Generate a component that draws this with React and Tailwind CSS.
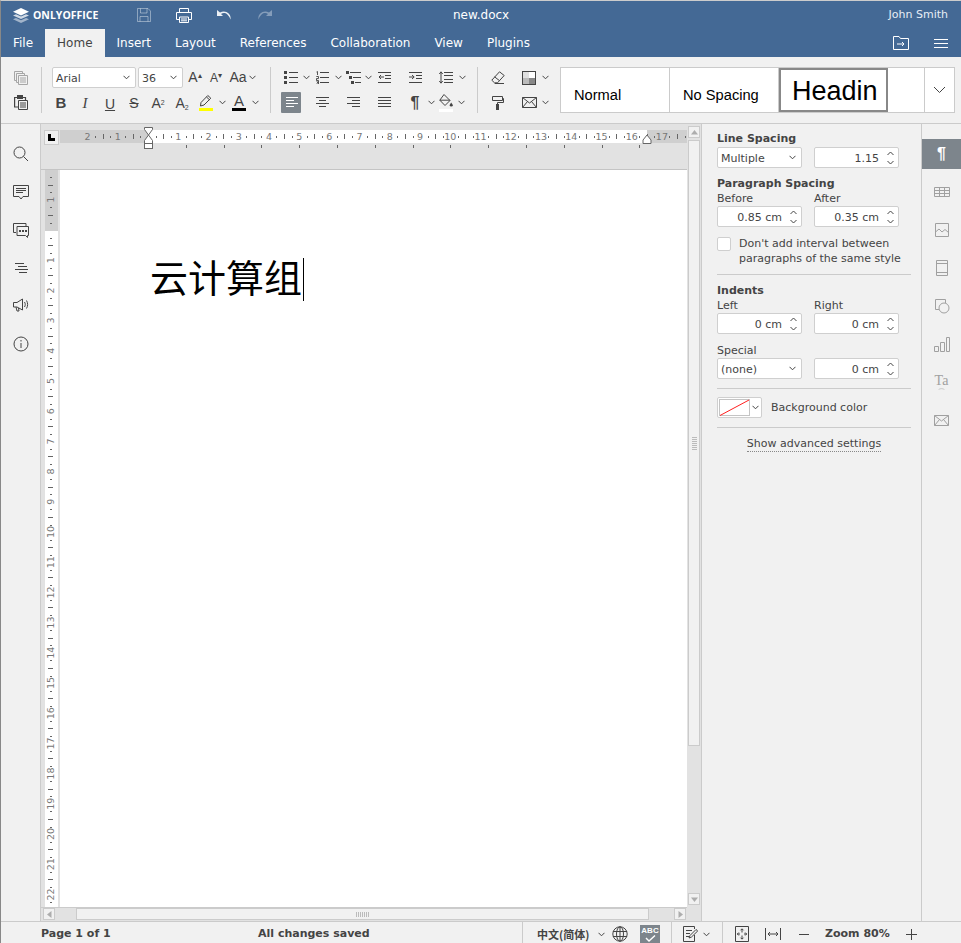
import React from 'react';

const SANS = "font-['DejaVu_Sans',sans-serif]";

const Ic = ({ w = 16, h = 16, children, className = '', stroke = '#444' }) => (
  <svg width={w} height={h} viewBox={`0 0 ${w} ${h}`} fill="none" stroke={stroke} className={className}>
    {children}
  </svg>
);

const Caret = ({ color = '#444' }) => (
  <svg width="7" height="5" viewBox="0 0 7 5" fill="none" stroke={color}>
    <path d="M.5 .8 3.5 3.8 6.5 .8" />
  </svg>
);

// fixed size slot in a toolbar row, the width comes in as a class
const Cell = ({ className = '', children }) => (
  <div className={`flex h-[21px] shrink-0 items-center justify-center ${className}`}>{children}</div>
);

const CaretCell = () => (
  <Cell className="w-[8px]">
    <Caret />
  </Cell>
);

const hLines = (rows) => rows.map(([a, b, y]) => `M${a} ${y}H${b}`).join('');

const Align = ({ rows, stroke }) => (
  <Ic w={13} h={13} stroke={stroke}>
    <path d={hLines(rows)} />
  </Ic>
);

const Bullets = () => (
  <Ic w={14} h={13}>
    <path d={hLines([[5, 14, 1.5], [5, 14, 6.5], [5, 14, 11.5]])} />
    <path fill="#444" stroke="none" d="M0 0h3v3H0zM0 5h3v3H0zM0 10h3v3H0z" />
  </Ic>
);

const Numbers = () => (
  <Ic w={13} h={13}>
    <path d={hLines([[4, 13, 1.5], [4, 13, 6.5], [4, 13, 11.5]])} />
    <path strokeWidth=".9" d="M.5 1 1.5 .5V4M.3 5.5H2.5V7.5H.5V9.4H2.8M.3 10H2.5V13H.3M1 11.5H2.5" />
  </Ic>
);

const Multi = () => (
  <Ic w={15} h={13}>
    <path d={hLines([[4, 15, 1.5], [7, 15, 6.5], [9, 15, 11.5]])} />
    <path fill="#444" stroke="none" d="M0 0h3v3H0zM3 5h3v3H3zM5 10h3v3H5z" />
  </Ic>
);

const Outdent = ({ flip }) => (
  <Ic w={13} h={11}>
    <path d={hLines([[0, 13, .5], [7, 13, 3.5], [7, 13, 6.5], [0, 13, 10.5]])} />
    {flip ? <path d="M0 5H5M3 3 5.2 5 3 7" /> : <path d="M1 5H6M3 3 1 5 3 7" />}
  </Ic>
);

const LineSpacing = () => (
  <Ic w={14} h={13}>
    <path d={hLines([[5, 14, 1.5], [5, 14, 4.5], [5, 14, 8.5], [5, 14, 11.5]])} />
    <path d="M2 1V12M.3 3 2 .8 3.7 3M.3 10 2 12.2 3.7 10" />
  </Ic>
);

const Copy = ({ stroke = '#444' }) => (
  <Ic w={14} h={14} stroke={stroke}>
    <path d="M.5 .5H8.5V2.5M.5 .5V9.5H2.5M2.5 2.5H10.5V4.5M2.5 2.5V11.5H4.5M4.5 4.5H13.5V13.5H4.5Z" />
    <path d={hLines([[6, 12, 7], [6, 12, 9], [6, 12, 11]])} />
  </Ic>
);

const Paste = () => (
  <Ic w={14} h={15}>
    <path strokeWidth="1.2" d="M3 2.5H.6V12H4M9 2.5H11.5V5" />
    <path fill="#444" stroke="none" d="M3 0h6v4H3z" />
    <path d="M4.5 5.5H13.5V14.5H4.5Z" />
    <path d={hLines([[6, 12, 8], [6, 12, 10], [6, 12, 12]])} />
  </Ic>
);

const Eraser = () => (
  <Ic w={14} h={13}>
    <path d="M8.5 .8 13.2 4.5 6.5 11.8H3.5L.8 9.2ZM3.5 5.8 8.2 9.4M3.8 12.5H13" />
  </Ic>
);

const Scheme = () => (
  <svg width="14" height="14" viewBox="0 0 14 14">
    <rect x=".5" y=".5" width="13" height="13" fill="#fff" stroke="#444" />
    <rect x="7" y="1" width="6" height="6" fill="#fff" />
    <rect x="1" y="1" width="6" height="6" fill="#e0e0e0" />
    <rect x="1" y="7" width="6" height="6" fill="#bbb" />
    <rect x="7" y="7" width="6" height="6" fill="#888" />
  </svg>
);

const PaintFormat = () => (
  <Ic w={12} h={14}>
    <path d="M.5 .5H10.5V4.5H.5ZM10.5 2.5H11.5V6.5H5.5V8.5" />
    <path fill="#444" stroke="none" d="M4 8h3v6H4z" />
  </Ic>
);

const Mail = ({ stroke = '#444', w = 15 }) => (
  <Ic w={w} h={11} stroke={stroke}>
    <path d={`M.5 .5H${w - .5}V10.5H.5ZM.5 .5 ${w / 2} 6 ${w - .5} .5M.5 10.5 ${w / 2 - 2} 4.5M${w - .5} 10.5 ${w / 2 + 2} 4.5`} />
  </Ic>
);

const Highlight = () => (
  <div className="relative flex h-[18px] w-[14px] flex-col items-center">
    <Ic w={14} h={13}>
      <path d="M2 8.5 8.8 1.5 11.8 4.2 5 11 1.5 12ZM7.5 3 10.5 5.8" />
    </Ic>
    <div className="mt-[1px] h-[3px] w-[14px] bg-[#ffff00]" />
  </div>
);

const FontColor = () => (
  <div className="flex h-[18px] w-[14px] flex-col items-center">
    <span className="font-['Liberation_Sans',sans-serif] text-[15px] leading-[14px] text-[#444]">A</span>
    <div className="h-[3px] w-[14px] bg-black" />
  </div>
);

const FillBucket = () => (
  <div className="flex h-[18px] w-[14px] flex-col items-center">
    <Ic w={14} h={14}>
      <path d="M5 .5 11 6.5 6 11.5 .8 6.2ZM.8 6.2H11" />
      <path fill="#444" stroke="none" d="M12.2 8.5 14 11.2A1.8 1.8 0 0 1 10.5 11.2Z" />
    </Ic>
    <div className="mt-[1px] h-[3px] w-[14px] bg-white" />
  </div>
);

const Glyph = ({ className = '', children }) => (
  <span className={`font-['Liberation_Sans',sans-serif] text-[#444] ${className}`}>{children}</span>
);

const Combo = ({ className, label }) => (
  <div className={`flex h-[21px] shrink-0 items-center justify-between rounded-[2px] border border-[#cfcfcf] bg-white pl-[3px] pr-[5px] ${className}`}>
    <span className="pt-[3px] text-[11px] text-[#444]">{label}</span>
    <Caret />
  </div>
);

const Separator = () => <div className="h-[46px] w-px shrink-0 bg-[#cbcbcb]" />;

function Toolbar() {
  return (
    <div className="flex h-[67px] shrink-0 items-start border-b border-[#cbcbcb] bg-[#f1f1f1] pt-[10px]">
      <div className="flex h-[46px] w-[40px] shrink-0 flex-col justify-between pl-[13px]">
        <Cell className="w-[14px]"><Copy stroke="#a6a6a6" /></Cell>
        <Cell className="w-[14px]"><Paste /></Cell>
      </div>
      <Separator />

      <div className="ml-[10px] flex h-[46px] w-[218px] shrink-0 flex-col justify-between">
        <div className="flex">
          <Combo className="w-[84px]" label="Arial" />
          <Combo className="ml-[2px] w-[45px]" label="36" />
          <Cell className="w-[24px]">
            <Glyph className="text-[14px]">A<sup className="text-[8px]">▴</sup></Glyph>
          </Cell>
          <Cell className="w-[18px]">
            <Glyph className="text-[12px]">A<sup className="text-[8px]">▾</sup></Glyph>
          </Cell>
          <Cell className="ml-[3px] w-[20px]"><Glyph className="text-[14px]">Aa</Glyph></Cell>
          <CaretCell />
        </div>
        <div className="flex">
          <Cell className="w-[18px] pt-[2px]"><Glyph className="text-[15px] font-bold">B</Glyph></Cell>
          <Cell className="ml-[3px] w-[24px] pt-[2px]"><Glyph className="font-['Liberation_Serif',serif] text-[15px] italic">I</Glyph></Cell>
          <Cell className="ml-[1px] w-[24px] pt-[2px]"><Glyph className="text-[14px] leading-[14px] underline">U</Glyph></Cell>
          <Cell className="w-[24px] pt-[2px]"><Glyph className="text-[14px] line-through">S</Glyph></Cell>
          <Cell className="w-[24px] pt-[2px]"><Glyph className="text-[14px]">A<sup className="text-[7px]">2</sup></Glyph></Cell>
          <Cell className="w-[24px] pt-[2px]"><Glyph className="text-[14px]">A<sub className="text-[7px]">2</sub></Glyph></Cell>
          <Cell className="w-[24px]"><Highlight /></Cell>
          <CaretCell />
          <Cell className="ml-[1px] w-[24px]"><FontColor /></Cell>
          <CaretCell />
        </div>
      </div>
      <Separator />

      <div className="flex h-[46px] w-[206px] shrink-0 flex-col justify-between">
        <div className="flex">
          <Cell className="ml-[8px] w-[23px]"><Bullets /></Cell>
          <CaretCell />
          <Cell className="w-[24px]"><Numbers /></Cell>
          <CaretCell />
          <Cell className="w-[22px]"><Multi /></Cell>
          <CaretCell />
          <Cell className="w-[24px]"><Outdent /></Cell>
          <Cell className="ml-[7px] w-[24px]"><Outdent flip /></Cell>
          <Cell className="ml-[7px] w-[24px]"><LineSpacing /></Cell>
          <CaretCell />
        </div>
        <div className="flex">
          <Cell className="ml-[10px] w-[20px] rounded-[1px] bg-[#7d858c]">
            <Align stroke="#fff" rows={[[1, 14, 1.5], [1, 9, 4.5], [1, 14, 7.5], [1, 9, 10.5]]} />
          </Cell>
          <Cell className="ml-[9px] w-[24px]">
            <Align rows={[[0, 13, 1.5], [3, 10, 4.5], [0, 13, 7.5], [3, 10, 10.5]]} />
          </Cell>
          <Cell className="ml-[7px] w-[24px]">
            <Align rows={[[0, 13, 1.5], [5, 13, 4.5], [0, 13, 7.5], [5, 13, 10.5]]} />
          </Cell>
          <Cell className="ml-[7px] w-[24px]">
            <Align rows={[[0, 13, 1.5], [0, 13, 4.5], [0, 13, 7.5], [0, 13, 10.5]]} />
          </Cell>
          <Cell className="ml-[7px] w-[24px]"><Glyph className="text-[16px] font-bold">¶</Glyph></Cell>
          <CaretCell />
          <Cell className="w-[22px]"><FillBucket /></Cell>
          <CaretCell />
        </div>
      </div>
      <Separator />

      <div className="flex h-[46px] w-[82px] shrink-0 flex-col justify-between">
        <div className="flex">
          <Cell className="ml-[8px] w-[24px]"><Eraser /></Cell>
          <Cell className="ml-[7px] w-[24px]"><Scheme /></Cell>
          <CaretCell />
        </div>
        <div className="flex">
          <Cell className="ml-[8px] w-[24px]"><PaintFormat /></Cell>
          <Cell className="ml-[7px] w-[24px]"><Mail /></Cell>
          <CaretCell />
        </div>
      </div>

      <StyleGallery />
    </div>
  );
}

function StyleGallery() {
  const font = "font-['Liberation_Sans',sans-serif] text-black";
  return (
    <div className="flex h-[46px] w-[395px] shrink-0 border border-[#cbcbcb] bg-white">
      <div className={`flex w-[109px] items-end border-r border-[#cbcbcb] pb-[8px] pl-[13px] text-[14.67px] leading-[18px] ${font}`}>Normal</div>
      <div className={`flex w-[109px] items-end border-r border-[#cbcbcb] pb-[8px] pl-[13px] text-[14.67px] leading-[18px] ${font}`}>No Spacing</div>
      <div className={`flex w-[109px] items-center overflow-hidden border-2 border-[#888] pl-[11px] pt-[3px] text-[27px] ${font}`}>Headin</div>
      <div className="w-[37px] border-r border-[#cbcbcb]" />
      <div className="flex flex-1 items-center justify-center">
        <svg width="13" height="8" viewBox="0 0 13 8" fill="none" stroke="#444"><path d="M1 1 6.5 6.5 12 1" /></svg>
      </div>
    </div>
  );
}

function Header() {
  return (
    <div className={`shrink-0 bg-[#446995] text-white ${SANS}`}>
      <div className="flex h-[28px] items-center">
        <svg width="16" height="15" viewBox="0 0 16 15" className="ml-[12px]">
          <path fill="#fff" fillOpacity=".5" d="M8 15 0 11.3 3 10 8 12.3 13 10 16 11.3Z" />
          <path fill="#fff" fillOpacity=".75" d="M8 11 0 7.5 3 6.2 8 8.5 13 6.2 16 7.5Z" />
          <path fill="#fff" d="M8 7.5 0 3.8 8 0 16 3.8Z" />
        </svg>
        <span className="ml-[4px] w-[67px] font-['Open_Sans',sans-serif] text-[10.5px] font-bold leading-none">ONLYOFFICE</span>
        <svg width="14" height="14" viewBox="0 0 14 14" fill="none" stroke="#fff" strokeOpacity=".4" className="ml-[37px]">
          <path d="M.5 .5H11L13.5 3V13.5H.5ZM3.5 .5V5H10V.5M3 13.5V8.5H11V13.5" />
        </svg>
        <svg width="16" height="15" viewBox="0 0 16 15" fill="none" stroke="#fff" className="ml-[25px]">
          <path d="M3.5 4.5V.5H12.5V4.5M3.5 11.5H.5V4.5H15.5V11.5H12.5M3.5 9H12.5V14.5H3.5ZM5 11H11M5 12.8H11" />
        </svg>
        <svg width="15" height="10" viewBox="0 0 15 10" fill="#fff" className="ml-[25px]">
          <path d="M0 0V6H6L4 4C7 2 11 3 13.5 9.5 14.5 4 9 -.5 3 2.4Z" fillOpacity=".9" />
        </svg>
        <svg width="15" height="10" viewBox="0 0 15 10" fill="#fff" className="ml-[25px]">
          <path d="M15 0V6H9L11 4C8 2 4 3 1.5 9.5 .5 4 6 -.5 12 2.4Z" fillOpacity=".35" />
        </svg>
        <span className="ml-[181px] w-[56px] text-center text-[12px]">new.docx</span>
        <span className="ml-auto mr-[13px] text-[11px] text-[#e8eef5]">John Smith</span>
      </div>
      <div className="flex h-[28px] items-stretch text-[12px]">
        {['File', 'Home', 'Insert', 'Layout', 'References', 'Collaboration', 'View', 'Plugins'].map((tab) => (
          <div
            key={tab}
            className={tab === 'Home' ? 'flex items-center bg-[#f1f1f1] px-[12px] text-[#444]' : 'flex items-center px-[12px]'}
          >
            {tab}
          </div>
        ))}
        <svg width="16" height="14" viewBox="0 0 16 14" fill="none" stroke="#fff" className="ml-auto self-center">
          <path d="M.5 13.5V.5H6L7.5 2.5H15.5V13.5ZM4 8H11M9 6 11 8 9 10" />
        </svg>
        <svg width="14" height="9" viewBox="0 0 14 9" fill="none" stroke="#fff" className="ml-[25px] mr-[13px] self-center">
          <path d={hLines([[0, 14, .5], [0, 14, 4.5], [0, 14, 8.5]])} />
        </svg>
      </div>
    </div>
  );
}

function LeftRail() {
  return (
    <div className="flex w-[40px] shrink-0 flex-col items-center gap-[22px] border-r border-[#cbcbcb] bg-[#f1f1f1] pt-[22px]">
      <Ic w={16} h={16} stroke="#444">
        <circle cx="6.5" cy="6.5" r="5.5" />
        <path d="M10.5 10.5 15 15" />
      </Ic>
      <Ic w={16} h={16}>
        <path d="M.5 1.5H15.5V12.5H10L8 15 6 12.5H.5Z" />
        <path d={hLines([[3, 13, 4.5], [3, 13, 6.5], [3, 10, 8.5]])} />
      </Ic>
      <Ic w={16} h={16}>
        <path d="M3 10.5H.5V1.5H13V4M4 4.5H15.5V13.5H14.5V15.5L12.5 13.5H4Z" />
        <path stroke="none" fill="#444" d="M6 8h2v2H6zM9 8h2v2H9zM12 8h2v2h-2z" />
      </Ic>
      <Ic w={14} h={16}>
        <path d={hLines([[1, 10, 3.5], [4, 13, 6.5], [1, 14, 9.5], [5, 13, 12.5]])} />
      </Ic>
      <Ic w={16} h={16}>
        <path d="M.5 4.5H4L9.5 1V12L4 9H.5ZM3 9 4 13H6L5.5 10M11.5 4C12.5 5.5 12.5 7.5 11.5 9M13.5 2.5C15 5 15 8 13.5 10.5" />
      </Ic>
      <Ic w={16} h={16}>
        <circle cx="8" cy="8" r="7" />
        <path d="M8 7V12M8 4V5.5" />
      </Ic>
    </div>
  );
}

const CM = 30.23;
const ZERO_X = 88;
const cmRange = (from, to) => {
  const out = [];
  for (let i = from; i <= to; i += 1) out.push(i);
  return out;
};

function HRuler() {
  const units = cmRange(-2, 18);
  return (
    <svg width="627" height="46" viewBox="0 0 627 46" className="block">
      <rect x="0" y="6" width="627" height="13" fill="#cfcfcf" />
      <rect x={ZERO_X} y="6" width="499" height="13" fill="#fff" />
      {units.map((n) => {
        const x = ZERO_X + n * CM;
        return (
          <g key={n}>
            {n !== 0 && x > 0 && x < 627 && (
              <text x={x} y="15.5" textAnchor="middle" fontFamily="DejaVu Sans" fontSize="9.5" fill="#777">
                {Math.abs(n)}
              </text>
            )}
            {x + 7.5 > 0 && x + 7.5 < 625 && <rect x={Math.round(x + 7.5)} y="12" width="1" height="2" fill="#666" />}
            {x + 15 > 0 && x + 15 < 625 && <rect x={Math.round(x + 15)} y="10" width="1" height="5" fill="#666" />}
            {x + 22.7 > 0 && x + 22.7 < 625 && <rect x={Math.round(x + 22.7)} y="12" width="1" height="2" fill="#666" />}
          </g>
        );
      })}
      {cmRange(1, 13).map((n) => (
        <rect key={n} x={Math.round(ZERO_X + n * 37.8)} y="21" width="1" height="3" fill="#666" />
      ))}
      <path d="M84.5 3.5H92.5V5.5L88.5 11 84.5 5.5Z" fill="#fff" stroke="#666" />
      <path d="M88.5 11 92.5 16.5V19.5H84.5V16.5Z" fill="#fff" stroke="#666" />
      <rect x="84.5" y="19.5" width="8" height="5" fill="#fff" stroke="#666" />
      <path d="M587 11 591 16V19.5H583V16Z" fill="#fff" stroke="#666" />
    </svg>
  );
}

function VRuler() {
  const height = 737;
  const zero = 60;
  const units = cmRange(-2, 23);
  return (
    <svg width="13" height={height} viewBox={`0 0 13 ${height}`} className="block">
      <rect width="13" height={height} fill="#fff" />
      <rect width="13" height={zero + 1} fill="#cfcfcf" />
      {units.map((n) => {
        const y = zero + n * 30.2;
        return (
          <g key={n}>
            {n !== 0 && y > 0 && y < height && (
              <text
                transform={`translate(9 ${y}) rotate(-90)`}
                textAnchor="middle"
                fontFamily="DejaVu Sans"
                fontSize="9.5"
                fill="#777"
              >
                {Math.abs(n)}
              </text>
            )}
            {[[7.5, 2, 5], [15, 5, 3], [22.7, 2, 5]].map(([d, w, x]) =>
              y + d > 0 && y + d < height ? (
                <rect key={d} x={x} y={Math.round(y + d)} width={w} height="1" fill="#666" />
              ) : null
            )}
          </g>
        );
      })}
    </svg>
  );
}

const ScrollBtn = ({ className = '', d }) => (
  <div className={`flex shrink-0 items-center justify-center border border-[#cbcbcb] bg-[#f1f1f1] ${className}`}>
    <svg width="9" height="9" viewBox="0 0 9 9"><path d={d} fill="#adadad" /></svg>
  </div>
);

function Editor() {
  return (
    <div className="flex min-w-0 flex-1 bg-[#e2e2e2]">
      <div className="flex min-w-0 flex-1 flex-col">
        <div className="flex h-[46px] shrink-0 border-b border-[#c4c4c4]">
          <div className="ml-[3px] mt-[6px] flex h-[15px] w-[15px] shrink-0 items-end justify-start border border-[#cbcbcb] bg-[#f1f1f1] pb-[3px] pl-[3px]">
            <div className="h-[7px] w-[7px] border-b-[3px] border-l-[3px] border-black" />
          </div>
          <div className="ml-[1px]">
            <HRuler />
          </div>
        </div>
        <div className="flex min-h-0 flex-1 overflow-hidden">
          <div className="ml-[4px] w-[13px] shrink-0">
            <VRuler />
          </div>
          <div className="ml-[2px] flex-1 bg-white pl-[90px] pt-[87px]">
            <div className="flex items-center">
              <span className="-translate-y-[3px] font-['Noto_Sans_CJK_SC',sans-serif] text-[38px] leading-[44px] text-black">云计算组</span>
              <div className="ml-[1px] h-[43px] w-px bg-black" />
            </div>
          </div>
        </div>
        <div className="flex h-[14px] shrink-0 items-start border-t border-[#cbcbcb] bg-[#e2e2e2]">
          <ScrollBtn className="ml-[2px] h-[12px] w-[12px]" d="M6.5 1V8L2 4.5Z" />
          <div className="ml-[21px] flex h-[12px] w-[573px] items-center justify-center border border-[#cbcbcb] bg-[#f1f1f1]">
            <svg width="13" height="5" viewBox="0 0 13 5" stroke="#bbb"><path d="M.5 0V5M2.5 0V5M4.5 0V5M6.5 0V5M8.5 0V5M10.5 0V5M12.5 0V5" /></svg>
          </div>
          <ScrollBtn className="ml-[25px] h-[12px] w-[12px]" d="M2.5 1V8L7 4.5Z" />
        </div>
      </div>
      <div className="flex w-[14px] shrink-0 flex-col items-start pl-px pt-[2px]">
        <ScrollBtn className="h-[12px] w-[12px]" d="M1 6.5H8L4.5 2Z" />
        <div className="mt-[2px] flex h-[606px] w-[12px] items-center justify-center border border-[#cbcbcb] bg-[#f1f1f1]">
          <svg width="5" height="13" viewBox="0 0 5 13" stroke="#bbb"><path d="M0 .5H5M0 2.5H5M0 4.5H5M0 6.5H5M0 8.5H5M0 10.5H5M0 12.5H5" /></svg>
        </div>
        <div className="h-[147px] w-[12px]" />
        <ScrollBtn className="h-[12px] w-[12px]" d="M1 2.5H8L4.5 7Z" />
      </div>
    </div>
  );
}

const Spin = () => (
  <div className="flex w-[8px] flex-col items-center gap-[4px]">
    <svg width="7" height="5" viewBox="0 0 7 5" fill="none" stroke="#444"><path d="M.5 4 3.5 1 6.5 4" /></svg>
    <svg width="7" height="5" viewBox="0 0 7 5" fill="none" stroke="#444"><path d="M.5 1 3.5 4 6.5 1" /></svg>
  </div>
);

const Field = ({ value }) => (
  <div className="flex h-[21px] w-[85px] items-center justify-end rounded-[2px] border border-[#cfcfcf] bg-white pr-[4px] text-[11px] text-[#444]">
    <span className="mr-[7px] pt-[3px]">{value}</span>
    <Spin />
  </div>
);

const Pick = ({ value }) => (
  <div className="flex h-[21px] w-[85px] items-center justify-between rounded-[2px] border border-[#cfcfcf] bg-white pl-[3px] pr-[5px] text-[11px] text-[#444]">
    <span className="pt-[3px]">{value}</span>
    <Caret />
  </div>
);

const Pair = ({ className = '', children }) => <div className={`flex gap-[12px] ${className}`}>{children}</div>;
const Heading = ({ className = '', children }) => <div className={`h-[15px] text-[11px] font-bold leading-[15px] ${className}`}>{children}</div>;
const Small = ({ className = '', children }) => <div className={`h-[15px] w-[85px] text-[11px] leading-[15px] ${className}`}>{children}</div>;
const Rule = ({ className = '' }) => <div className={`h-px w-[194px] bg-[#cbcbcb] ${className}`} />;

function SettingsPanel() {
  return (
    <div className="w-[220px] shrink-0 border-l border-[#cbcbcb] bg-[#f1f1f1] pl-[15px] pt-[7px] text-[#444]">
      <Heading>Line Spacing</Heading>
      <Pair className="mt-[1px]">
        <Pick value="Multiple" />
        <Field value="1.15" />
      </Pair>
      <Heading className="mt-[8px]">Paragraph Spacing</Heading>
      <Pair>
        <Small>Before</Small>
        <Small>After</Small>
      </Pair>
      <Pair>
        <Field value="0.85 cm" />
        <Field value="0.35 cm" />
      </Pair>
      <div className="mt-[10px] flex">
        <div className="h-[14px] w-[14px] shrink-0 rounded-[2px] border border-[#cfcfcf] bg-white" />
        <div className="ml-[8px] -mt-[1px] w-[175px] text-[11px] leading-[15px]">
          Don't add interval between paragraphs of the same style
        </div>
      </div>
      <Rule className="mt-[8px]" />
      <Heading className="mt-[8px]">Indents</Heading>
      <Pair>
        <Small>Left</Small>
        <Small>Right</Small>
      </Pair>
      <Pair>
        <Field value="0 cm" />
        <Field value="0 cm" />
      </Pair>
      <Small className="mt-[9px]">Special</Small>
      <Pair>
        <Pick value="(none)" />
        <Field value="0 cm" />
      </Pair>
      <Rule className="mt-[9px]" />
      <div className="mt-[8px] flex items-center">
        <div className="flex h-[21px] w-[45px] items-center rounded-[2px] border border-[#cfcfcf] bg-white pl-[1px]">
          <svg width="31" height="17" viewBox="0 0 31 17" fill="#fff" className="shrink-0">
            <rect x=".5" y=".5" width="30" height="16" stroke="#c4c4c4" />
            <path d="M1 16.5 30 1" stroke="#ff1f1f" />
          </svg>
          <div className="ml-[2px]"><Caret /></div>
        </div>
        <span className="ml-[9px] pt-[2px] text-[11px]">Background color</span>
      </div>
      <Rule className="mt-[9px]" />
      <div className="mt-[8px] flex w-[194px] justify-center">
        <span className="border-b border-dotted border-[#888] text-[11px] leading-[15px]">Show advanced settings</span>
      </div>
    </div>
  );
}

function RightTabs() {
  const c = '#a0a0a0';
  return (
    <div className="flex w-[40px] shrink-0 flex-col items-center border-l border-[#cbcbcb] bg-[#f1f1f1] pt-[15px]">
      <div className="flex h-[30px] w-full items-center justify-center bg-[#7d858c]">
        <span className="font-['Liberation_Sans',sans-serif] text-[16px] font-bold text-white">¶</span>
      </div>
      <div className="mt-[15px] flex flex-col items-center gap-[22px]">
        <Ic w={16} h={16} stroke={c}>
          <path d="M.5 3.5H15.5V12.5H.5ZM.5 6.5H15.5M.5 9.5H15.5M5.5 3.5V12.5M10.5 3.5V12.5" />
        </Ic>
        <Ic w={16} h={16} stroke={c}>
          <path d="M1.5 1.5H14.5V14.5H1.5ZM1.5 10 5 7 8 10 11 7.5 14.5 10.5" />
        </Ic>
        <Ic w={12} h={16} stroke={c}>
          <path d="M.5 .5H11.5V15.5H.5ZM.5 3.5H11.5M.5 12.5H11.5" />
        </Ic>
        <Ic w={16} h={16} stroke={c}>
          <path d="M5 11.5H1.5V1.5H11.5V5" />
          <circle cx="10" cy="10" r="5" />
        </Ic>
        <Ic w={16} h={16} stroke={c}>
          <path d="M.5 10.5H4.5V15.5H.5ZM6.5 6.5H10.5V15.5H6.5ZM12.5 1.5H15.5V15.5H12.5Z" />
        </Ic>
        <div className="flex h-[16px] w-[16px] flex-col items-center">
          <span className="font-['Liberation_Serif',serif] text-[14px] leading-[14px] text-[#a0a0a0]">Ta</span>
          <svg width="13" height="4" viewBox="0 0 13 4" fill="none" stroke={c}><path d="M.5 3.5C3 .5 10 .5 12.5 3.5" /></svg>
        </div>
        <div className="flex h-[16px] items-center"><Mail stroke={c} w={15} /></div>
      </div>
    </div>
  );
}

function StatusBar() {
  return (
    <div className={`flex h-[22px] shrink-0 items-stretch border-t border-[#cbcbcb] bg-[#f1f1f1] text-[11px] text-[#444] ${SANS}`}>
      <div className="flex w-[521px] shrink-0 items-center pl-[40px] pt-[3px] font-bold">
        <span className="w-[217px]">Page 1 of 1</span>
        <span>All changes saved</span>
      </div>
      <div className="flex w-[149px] shrink-0 items-center border-l border-[#cbcbcb] pl-[14px] pt-[3px]">
        <span className="font-['Noto_Sans_CJK_SC',sans-serif] w-[60px] font-bold leading-none">中文(简体)</span>
        <div className="ml-[1px]"><Caret /></div>
        <svg width="16" height="16" viewBox="0 0 16 16" fill="none" stroke="#444" className="ml-[7px]">
          <circle cx="8" cy="8" r="7.2" />
          <ellipse cx="8" cy="8" rx="3.5" ry="7.2" />
          <path d="M8 .8V15.2M1 5.5H15M1 10.5H15" />
        </svg>
        <div className="ml-[12px] flex h-[18px] w-[20px] flex-col items-center bg-[#7d858c] pt-[1px] text-white">
          <span className="font-['Liberation_Sans',sans-serif] text-[8px] font-bold leading-[9px]">ABC</span>
          <svg width="12" height="7" viewBox="0 0 12 7" fill="none" stroke="#fff" strokeWidth="1.4"><path d="M2 3 5 6 11 .5" /></svg>
        </div>
      </div>
      <div className="flex w-[51px] shrink-0 items-center border-l border-[#cbcbcb] pl-[11px] pt-[3px]">
        <svg width="15" height="16" viewBox="0 0 15 16" fill="none" stroke="#444">
          <path d="M11.5 9V15.5H.5V.5H11.5V3M3 4.5H9M3 7.5H7M3 10.5H6" />
          <path d="M6 12 7 9.5 13 3.5 14.7 5 8.5 11Z" />
        </svg>
        <div className="ml-[5px]"><Caret /></div>
      </div>
      <div className="flex flex-1 items-center border-l border-[#cbcbcb] pl-[12px] pt-[3px]">
        <svg width="14" height="16" viewBox="0 0 14 16" fill="none" stroke="#444">
          <path d="M.5 .5H13.5V15.5H.5ZM7 3V6.5M5.5 4.3 7 2.8 8.5 4.3M7 13V9.5M5.5 11.7 7 13.2 8.5 11.7M2.5 8H5M3.8 6.5 2.3 8 3.8 9.5M11.5 8H9M10.2 6.5 11.7 8 10.2 9.5" />
        </svg>
        <svg width="16" height="12" viewBox="0 0 16 12" fill="none" stroke="#444" className="ml-[16px]">
          <path d="M.5 0V12M15.5 0V12M3 6H13M5 4 3 6 5 8M11 4 13 6 11 8" />
        </svg>
        <svg width="10" height="1" viewBox="0 0 10 1" stroke="#444" className="ml-[18px]"><path d="M0 .5H10" /></svg>
        <span className="ml-[16px] w-[65px] whitespace-nowrap font-bold">Zoom 80%</span>
        <svg width="11" height="11" viewBox="0 0 11 11" stroke="#444" className="ml-[16px]"><path d="M0 5.5H11M5.5 0V11" /></svg>
      </div>
    </div>
  );
}

export default function App() {
  return (
    <div className={`flex h-[943px] w-[961px] flex-col overflow-hidden border-l border-t border-l-[#888] border-t-[#ccc] bg-[#f1f1f1] ${SANS}`}>
      <Header />
      <Toolbar />
      <div className="flex min-h-0 flex-1">
        <LeftRail />
        <Editor />
        <SettingsPanel />
        <RightTabs />
      </div>
      <StatusBar />
    </div>
  );
}
